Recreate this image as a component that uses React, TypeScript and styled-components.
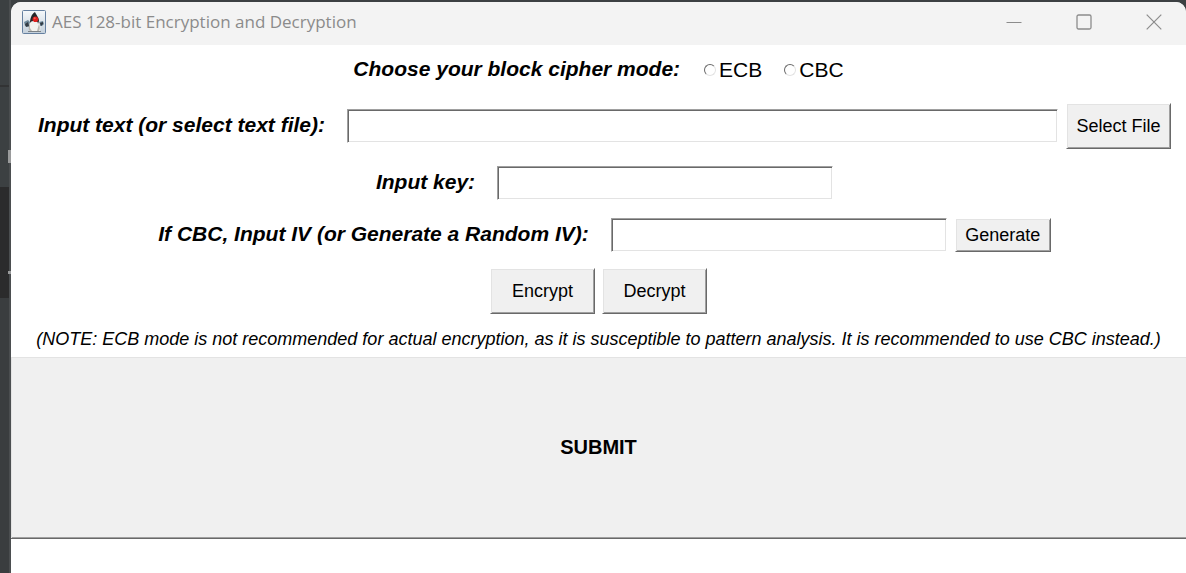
import React, { useState } from "react";
import styled, { createGlobalStyle } from "styled-components";

const GlobalStyle = createGlobalStyle`
  * { box-sizing: border-box; }
  body {
    margin: 0;
    background: #3c4042;
    color: #000;
    font-family: "Liberation Sans", Arial, sans-serif;
  }
`;

const Desktop = styled.div`
  display: flex;
  min-height: 100vh;
  background: #3c4042;
`;

const Strip = styled.div`
  flex: none;
  width: 11px;
  display: flex;
  flex-direction: column;
  border-right: 2px solid #4b4e50;
`;

const StripPanel = styled.div<{ $height?: number; $color: string; $line?: boolean }>`
  display: flex;
  flex-direction: column;
  align-items: flex-end;
  justify-content: flex-end;
  flex: ${(p) => (p.$height ? "none" : "1")};
  height: ${(p) => (p.$height ? `${p.$height}px` : "auto")};
  padding-bottom: ${(p) => (p.$line ? 0 : 18)}px;
  background: ${(p) => p.$color};
  border-bottom: ${(p) => (p.$line ? "2px solid #323334" : "none")};
`;

const Mark = styled.span<{ $height: number }>`
  width: 3px;
  height: ${(p) => p.$height}px;
  margin: 0 -2px 6px 0;
  background: #9a9b9c;
`;

const Window = styled.div`
  flex: 1;
  min-width: 0;
  margin-top: 2px;
  background: #fff;
  border-radius: 10px 10px 0 0;
  overflow: hidden;
`;

const TitleBar = styled.header`
  display: flex;
  align-items: center;
  height: 43px;
  padding: 0 9px 3px 11px;
  background: #f3f3f3;
`;

const Title = styled.h1`
  flex: 1;
  margin: 0 0 0 6px;
  color: #8b8b8b;
  font: 400 17px/24px "Open Sans", "Noto Sans", sans-serif;
  white-space: nowrap;
`;

const WindowControls = styled.div`
  display: flex;
  gap: 24px;
`;

const ControlButton = styled.button`
  display: flex;
  align-items: center;
  justify-content: center;
  width: 46px;
  height: 40px;
  padding: 0;
  border: 0;
  background: transparent;
  color: #8c8c8c;
`;

const Row = styled.div<{ $top: number; $bottom: number; $gap?: number }>`
  display: flex;
  align-items: center;
  justify-content: center;
  gap: ${(p) => p.$gap ?? 8}px;
  padding: ${(p) => p.$top}px 4px ${(p) => p.$bottom}px;
`;

const fieldLabel = `
  padding: 0 14px 2px 12px;
  font-size: 21px;
  line-height: 24px;
  font-weight: 700;
  font-style: italic;
  white-space: nowrap;
`;

const FieldLabel = styled.label`
  ${fieldLabel}
`;

const ModeGroup = styled.div`
  display: flex;
  align-items: center;
  gap: 10px;
`;

const ModeLabel = styled.span`
  ${fieldLabel}
`;

const Option = styled.label`
  display: flex;
  align-items: center;
  gap: 3px;
  padding-right: 12px;
  font-size: 21px;
  line-height: 26px;
`;

const Radio = styled.input`
  appearance: none;
  width: 12px;
  height: 12px;
  margin: 0;
  border: 1px solid;
  border-color: #696969 #e3e3e3 #e3e3e3 #696969;
  border-radius: 50%;
  background: #fff;
  &:checked {
    background: radial-gradient(#000 0 2px, #fff 3px);
  }
`;

const TextField = styled.input<{ $wide?: boolean }>`
  flex: 0 1 ${(p) => (p.$wide ? 711 : 336)}px;
  min-width: 0;
  height: 34px;
  padding: 0 6px;
  border: 1px solid;
  border-color: #a0a0a0 #fff #fff #a0a0a0;
  border-radius: 0;
  box-shadow: inset 1px 1px #696969, inset -1px -1px #e3e3e3;
  outline: 0;
  background: #fff;
  font: 18px "Liberation Sans", Arial, sans-serif;
`;

const Button = styled.button<{ $compact?: boolean }>`
  flex: none;
  width: ${(p) => (p.$compact ? 96 : 105)}px;
  height: ${(p) => (p.$compact ? 34 : 46)}px;
  padding: 0;
  border: 1px solid;
  border-color: #fff #696969 #696969 #fff;
  border-radius: 0;
  box-shadow: inset 1px 1px #e3e3e3, inset -1px -1px #a0a0a0;
  background: #f0f0f0;
  color: #000;
  font: 18px "Liberation Sans", Arial, sans-serif;
`;

const Note = styled.p`
  margin: 0;
  padding: 14px 4px 7px;
  font-size: 18px;
  line-height: 22px;
  font-style: italic;
  text-align: center;
`;

const SubmitButton = styled.button`
  display: block;
  width: 100%;
  padding: 77px 0;
  border: 0;
  border-bottom: 1px solid #696969;
  box-shadow: inset 1px 1px #e3e3e3, inset 0 -1px #a0a0a0;
  background: #f0f0f0;
  color: #000;
  font: 700 20px/27px "Liberation Sans", Arial, sans-serif;
`;

const DukeIcon = () => (
  <svg width="24" height="24" viewBox="0 0 24 24" aria-hidden="true">
    <defs>
      <linearGradient id="tile" x1="0" y1="0" x2="0" y2="1">
        <stop offset="0" stopColor="#f6f9fb" />
        <stop offset="1" stopColor="#c3cfda" />
      </linearGradient>
    </defs>
    <rect x=".5" y=".5" width="23" height="23" rx="1" fill="url(#tile)" stroke="#6580a0" />
    <path d="M2 12l4-2 3 3-2 4-4-1zM17 12l4-1 1 3-2 2-3 0z" fill="#6d8798" />
    <path d="M3 14l3-2 1 4-3 1zM18 13l3-1v2l-2 2z" fill="#343c44" />
    <path d="M9 10c-2 4-3 8-1 11 3 1 7 1 10 0 1-4 0-8-2-11z" fill="#f2f2ee" />
    <path d="M13 2c1 3 4 5 4 9l-1 3c0-2-1-3-3-3-2 0-4 0-5 2 0-3 1-9 5-11z" fill="#252729" />
    <path d="M7 20c-1-2 0-5 1-7v5l2 3H8zM17 14c1 3 1 5 0 7h-2z" fill="#b9b8b2" />
    <path d="M6 21.5h13" stroke="#7c8286" />
    <circle cx="13.4" cy="9.2" r="2.8" fill="#df201d" />
    <circle cx="12.7" cy="8.2" r="1" fill="#ff6254" />
  </svg>
);

export default function App() {
  const [mode, setMode] = useState("");
  return (
    <>
      <GlobalStyle />
      <Desktop>
        <Strip>
          <StripPanel $height={87} $color="#3c4042" $line />
          <StripPanel $height={100} $color="#3c4042">
            <Mark $height={13} />
          </StripPanel>
          <StripPanel $height={111} $color="#2b2b2c">
            <Mark $height={3} />
          </StripPanel>
          <StripPanel $color="#3a3d3f" />
        </Strip>
        <Window>
          <TitleBar>
            <DukeIcon />
            <Title>AES 128-bit Encryption and Decryption</Title>
            <WindowControls>
              <ControlButton type="button" aria-label="Minimize">
                <svg width="16" height="16" fill="none" stroke="currentColor">
                  <path d="M.5 8.5h15" />
                </svg>
              </ControlButton>
              <ControlButton type="button" aria-label="Maximize">
                <svg width="16" height="16" fill="none" stroke="currentColor" strokeWidth="1.3">
                  <rect x="1" y="1" width="14" height="14" rx="1.5" />
                </svg>
              </ControlButton>
              <ControlButton type="button" aria-label="Close">
                <svg width="16" height="16" fill="none" stroke="currentColor" strokeWidth="1.2">
                  <path d="M.7 .7l14.6 14.6M15.3 .7L.7 15.3" />
                </svg>
              </ControlButton>
            </WindowControls>
          </TitleBar>
          <main>
            <Row $top={12} $bottom={12}>
              <ModeGroup role="radiogroup" aria-labelledby="mode-label">
                <ModeLabel id="mode-label">Choose your block cipher mode:</ModeLabel>
                {["ECB", "CBC"].map((name) => (
                  <Option key={name}>
                    <Radio
                      type="radio"
                      name="mode"
                      value={name}
                      checked={mode === name}
                      onChange={() => setMode(name)}
                    />
                    {name}
                  </Option>
                ))}
              </ModeGroup>
            </Row>
            <Row $top={8} $bottom={9}>
              <FieldLabel htmlFor="text">Input text (or select text file):</FieldLabel>
              <TextField id="text" type="text" $wide />
              <Button type="button">Select File</Button>
            </Row>
            <Row $top={8} $bottom={9}>
              <FieldLabel htmlFor="key">Input key:</FieldLabel>
              <TextField id="key" type="text" />
            </Row>
            <Row $top={9} $bottom={8}>
              <FieldLabel htmlFor="iv">If CBC, Input IV (or Generate a Random IV):</FieldLabel>
              <TextField id="iv" type="text" />
              <Button type="button" $compact>
                Generate
              </Button>
            </Row>
            <Row $top={8} $bottom={0} $gap={7}>
              <Button type="button">Encrypt</Button>
              <Button type="button">Decrypt</Button>
            </Row>
            <Note>
              (NOTE: ECB mode is not recommended for actual encryption, as it is susceptible to
              pattern analysis. It is recommended to use CBC instead.)
            </Note>
            <SubmitButton type="submit">SUBMIT</SubmitButton>
          </main>
        </Window>
      </Desktop>
    </>
  );
}
